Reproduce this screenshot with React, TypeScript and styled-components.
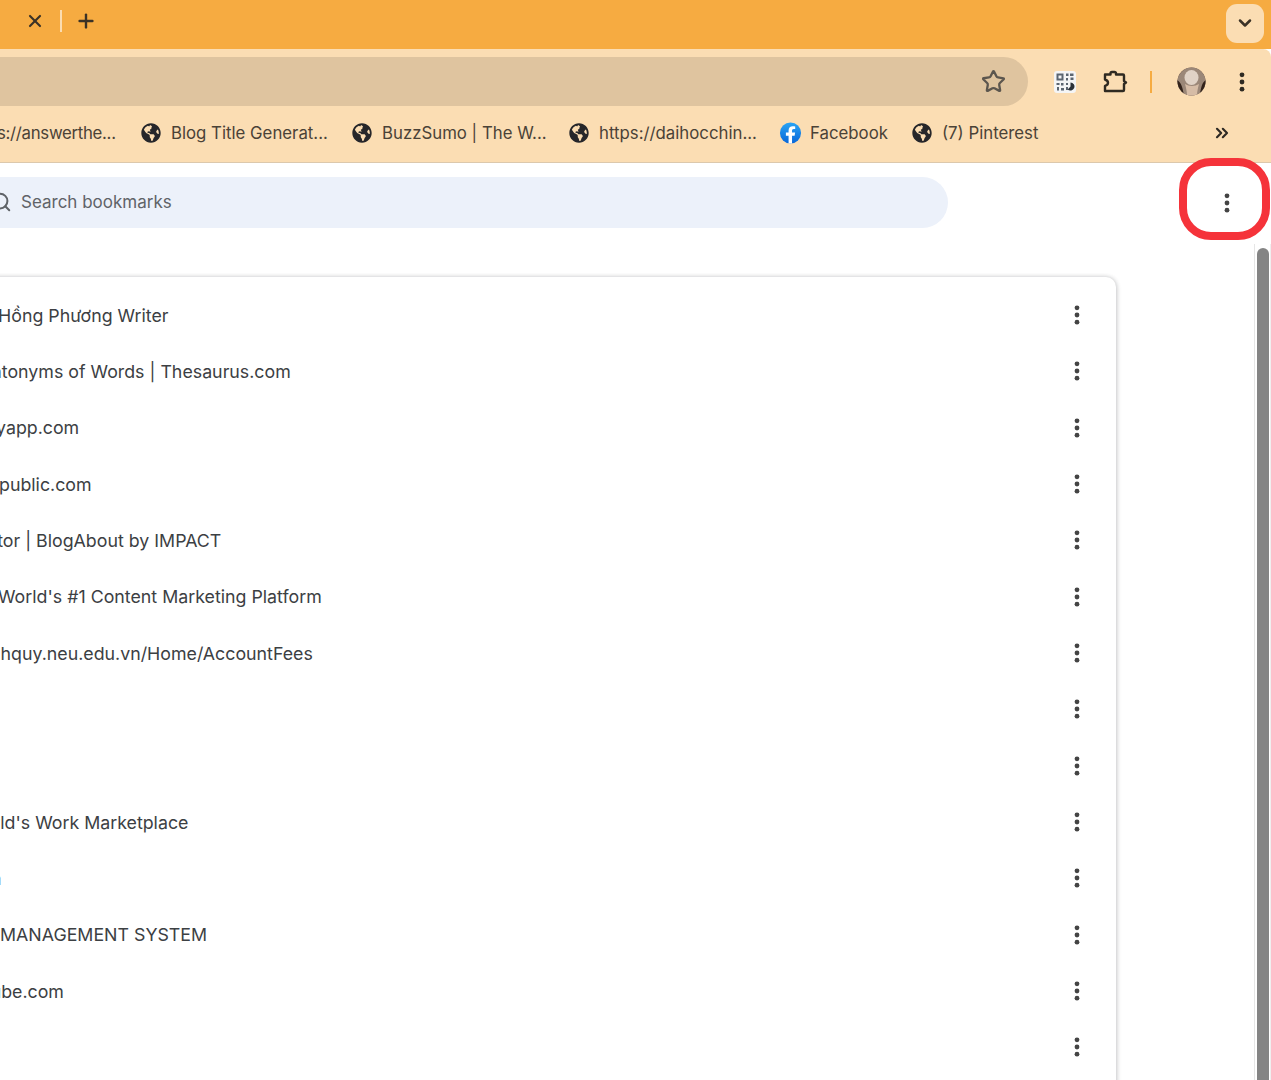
import React from 'react';
import styled, { createGlobalStyle } from 'styled-components';
import { FaGlobeAmericas } from 'react-icons/fa';
import { Search, Star, X, Plus, ChevronDown, ChevronsRight } from 'lucide-react';

const GlobalStyle = createGlobalStyle`
  html, body {
    margin: 0;
    padding: 0;
    background: #fff;
    overflow: hidden;
  }
  body {
    font-family: Inter, "Noto Sans", "Liberation Sans", sans-serif;
  }
`;

const Page = styled.div`
  width: 1271px;
  height: 1080px;
  overflow: hidden;
  display: flex;
  flex-direction: column;
`;

const TabStrip = styled.div`
  height: 49px;
  flex: none;
  background: #f6ab41;
  display: flex;
  align-items: center;
  padding: 0 7px 7px 25px;
  box-sizing: border-box;
  color: #3b3226;
`;

const TabDivider = styled.div`
  width: 2px;
  height: 22px;
  background: #fbdcb0;
  margin: 0 13px 0 15px;
`;

const TabListButton = styled.div`
  margin-left: auto;
  width: 38px;
  height: 39px;
  margin-top: 4px;
  border-radius: 11px;
  background: #fbddb3;
  display: flex;
  align-items: center;
  justify-content: center;
`;

const Toolbar = styled.div`
  height: 57px;
  flex: none;
  background: #fbddb3;
  border-top-right-radius: 8px;
  display: flex;
  align-items: flex-start;
  padding-top: 8px;
  box-sizing: border-box;
`;

const Omnibox = styled.div`
  width: 1028px;
  height: 49px;
  flex: none;
  background: #dfc49f;
  border-radius: 0 25px 25px 0;
  display: flex;
  align-items: center;
  justify-content: flex-end;
  padding-right: 22px;
  box-sizing: border-box;
  color: #5c564e;
`;

const ToolbarIcons = styled.div`
  display: flex;
  align-items: center;
  height: 49px;
  padding-left: 26px;
`;

const IconGap = styled.span<{ $width: number }>`
  width: ${({ $width }) => $width}px;
  flex: none;
`;

const ToolDivider = styled.div`
  width: 2px;
  height: 22px;
  background: #f6ab41;
  margin: 0 25px 0 22px;
`;

const BookmarksBar = styled.div`
  height: 57px;
  flex: none;
  background: #fbddb3;
  border-bottom: 1px solid #dcc8ac;
  box-sizing: border-box;
  display: flex;
  align-items: center;
  padding-bottom: 3px;
  padding-right: 39px;
  color: #4a4237;
  font-size: 16.8px;
`;

const Bookmark = styled.div<{ $width: number }>`
  display: flex;
  align-items: center;
  gap: 10px;
  white-space: nowrap;
  flex: none;
  width: ${({ $width }) => $width}px;
`;

const ClippedBookmark = styled(Bookmark)`
  margin-left: -3px;
  letter-spacing: -0.3px;
`;

const BookmarkIcon = styled.span`
  display: flex;
  width: 20px;
  height: 20px;
  color: #26262a;
`;

const FacebookSlot = styled.span`
  display: flex;
  width: 23px;
  height: 20px;
  margin-right: -2px;
  align-items: center;
  justify-content: center;
`;

const OverflowButton = styled.div`
  margin-left: auto;
  display: flex;
  color: #2f2a24;
`;

const Header = styled.div`
  height: 81px;
  flex: none;
  display: flex;
  justify-content: space-between;
  padding: 14px 24px 0 0;
  box-sizing: border-box;
  background: #fff;
`;

const SearchBox = styled.div`
  width: 988px;
  height: 51px;
  margin-left: -40px;
  background: #ecf1fa;
  border-radius: 0 26px 26px 0;
  display: flex;
  align-items: center;
  padding: 0 0 1px 30px;
  box-sizing: border-box;
  gap: 9px;
  font-size: 17px;
  color: #5f6368;
`;

const MenuButton = styled.div`
  position: relative;
  width: 40px;
  height: 51px;
  display: flex;
  align-items: center;
  justify-content: center;
`;

const Ring = styled.div`
  position: absolute;
  left: -28px;
  top: -19px;
  width: 91px;
  height: 82px;
  box-sizing: border-box;
  border: 8px solid #f5333a;
  border-radius: 32px;
`;

const Body = styled.div`
  flex: 1;
  min-height: 0;
  display: flex;
  justify-content: space-between;
  background: #fff;
`;

const CardArea = styled.div`
  padding-top: 33px;
  margin-left: -20px;
`;

const Card = styled.div`
  width: 1136px;
  padding: 10px 0 30px;
  background: #fff;
  border-radius: 10px;
  box-shadow: 0 0 4px rgba(60, 64, 67, 0.22), 1px 1px 5px rgba(60, 64, 67, 0.16);
`;

const Row = styled.div`
  height: 56.33px;
  padding: 0 19px 0 20px;
  display: flex;
  align-items: center;
  justify-content: space-between;
  font-size: 17.8px;
  color: #3c4043;
`;

const Title = styled.span<{ $lead: number }>`
  margin-left: ${({ $lead }) => $lead}px;
  white-space: nowrap;
`;

const RowMenu = styled.div`
  width: 40px;
  height: 40px;
  display: flex;
  align-items: center;
  justify-content: center;
`;

const ScrollTrack = styled.div`
  width: 17px;
  box-sizing: border-box;
  border-left: 1px solid #e6e6e6;
  border-right: 1px solid #efefef;
  padding: 4px 1px 0 2px;
`;

const ScrollThumb = styled.div`
  height: 100%;
  border-radius: 6px 6px 0 0;
  background: #848484;
`;

const Kebab = ({ color = '#444' }: { color?: string }) => (
  <svg width="6" height="20" viewBox="0 0 6 20">
    <circle cx="3" cy="2.8" r="2.4" fill={color} />
    <circle cx="3" cy="10" r="2.4" fill={color} />
    <circle cx="3" cy="17.2" r="2.4" fill={color} />
  </svg>
);

const Globe = () => (
  <BookmarkIcon>
    <FaGlobeAmericas size={20} />
  </BookmarkIcon>
);

const FacebookIcon = () => (
  <svg width="24" height="24" viewBox="0 0 24 24">
    <defs>
      <linearGradient id="fb" x1="0" y1="0" x2="0" y2="1">
        <stop offset="0" stopColor="#2aa4f4" />
        <stop offset="1" stopColor="#0866d8" />
      </linearGradient>
    </defs>
    <circle cx="12" cy="12" r="11" fill="url(#fb)" />
    <path
      d="M13.6 23v-8.2h2.7l.5-3.2h-3.2V9.6c0-.9.4-1.7 1.8-1.7h1.500V5.200s-1.300-.2-2.600-.2c-2.600 0-4.300 1.600-4.300 4.400v2.200H7.200v3.200H10V23z"
      fill="#fff"
    />
  </svg>
);

const QrIcon = () => (
  <svg width="22" height="22" viewBox="0 0 22 22">
    <rect x="0" y="0" width="22" height="22" rx="3" fill="#f4f5f6" />
    <g fill="#5b6570">
      <path d="M2.5 2.5h7v7h-7zM4.5 4.5v3h3v-3z" fillRule="evenodd" />
      <path d="M12 2.5h2.5V5H12zM16 2.500h3.500V5H16zM12 7h2v2.500h-2zM16.500 6.500h3V9h-3z" />
      <path d="M2.500 12h3v2h-3zM7 12h2.500v2.500H7zM3 16h2v3.500H3zM7 17h3v2.500H7z" />
      <path d="M12 12h2v2h-2zM12 16h2v3h-2z" />
    </g>
    <path d="M16.500 11.500a4 4 0 1 1-2.800 6.900l2.800-2.900z" fill="#2b3138" />
  </svg>
);

const PuzzleIcon = () => (
  <svg width="26" height="26" viewBox="0 0 26 26" fill="none" stroke="#2f2a22" strokeWidth="2.4" strokeLinejoin="round">
    <path d="M3 5.500h5.500V4.500a1.500 1.500 0 0 1 1.500-1.500h2.500a1.500 1.500 0 0 1 1.500 1.500v1H21a1 1 0 0 1 1 1v5.500l2 1.500-2 1.500v6a1 1 0 0 1-1 1H3v-5c2.200-.7 3-1.800 3-3.200S5.200 11.200 3 10.500z" />
  </svg>
);

const Avatar = () => (
  <svg width="29" height="29" viewBox="0 0 29 29">
    <defs>
      <clipPath id="avatar-clip">
        <circle cx="14.500" cy="14.500" r="14" />
      </clipPath>
    </defs>
    <g clipPath="url(#avatar-clip)">
      <rect width="29" height="29" fill="#6e5648" />
      <path d="M0 14C2 4 10 0 15 0s12 4 14 14v15H0z" fill="#9b8778" />
      <ellipse cx="14.500" cy="10.500" rx="7" ry="7.500" fill="#e0d2c6" />
      <path d="M8 17c1 4 2 7 2 12h10c0-5 1-8 2-12-4 2.500-10 2.500-14 0z" fill="#d6bca6" />
      <path d="M0 13c4 2 6 8 7 16H0zM29 13c-4 2-5 8-6.500 16H29z" fill="#33231b" />
    </g>
  </svg>
);

const rows: { text?: string; lead?: number }[] = [
  { text: 'Hồng Phương Writer', lead: -2 },
  { text: 'Antonyms of Words | Thesaurus.com', lead: -21 },
  { text: 'yapp.com', lead: -4 },
  { text: 'public.com', lead: -1 },
  { text: 'Generator | BlogAbout by IMPACT', lead: -64 },
  { text: "World's #1 Content Marketing Platform", lead: -2 },
  { text: 'nhquy.neu.edu.vn/Home/AccountFees', lead: -10 },
  {},
  {},
  { text: "World's Work Marketplace", lead: -34 },
  { text: 'n', lead: -9 },
  { text: 'MANAGEMENT SYSTEM', lead: 0 },
  { text: 'youtube.com', lead: -46 },
  {},
];

export default function App() {
  return (
    <Page>
      <GlobalStyle />
      <TabStrip>
        <X size={20} strokeWidth={2.6} />
        <TabDivider />
        <Plus size={22} strokeWidth={2.6} />
        <TabListButton>
          <ChevronDown size={20} strokeWidth={3} color="#3b3226" />
        </TabListButton>
      </TabStrip>
      <Toolbar>
        <Omnibox>
          <Star size={25} strokeWidth={2.2} />
        </Omnibox>
        <ToolbarIcons>
          <QrIcon />
          <IconGap $width={26} />
          <PuzzleIcon />
          <ToolDivider />
          <Avatar />
          <IconGap $width={33} />
          <Kebab color="#2f2a22" />
        </ToolbarIcons>
      </Toolbar>
      <BookmarksBar>
        <ClippedBookmark $width={144}>s://answerthe...</ClippedBookmark>
        <Bookmark $width={211}>
          <Globe />
          Blog Title Generat...
        </Bookmark>
        <Bookmark $width={217}>
          <Globe />
          BuzzSumo | The W...
        </Bookmark>
        <Bookmark $width={210}>
          <Globe />
          https://daihocchin...
        </Bookmark>
        <Bookmark $width={133}>
          <FacebookSlot>
            <FacebookIcon />
          </FacebookSlot>
          Facebook
        </Bookmark>
        <Bookmark $width={130}>
          <Globe />
          (7) Pinterest
        </Bookmark>
        <OverflowButton>
          <ChevronsRight size={20} strokeWidth={2.6} />
        </OverflowButton>
      </BookmarksBar>
      <Header>
        <SearchBox>
          <Search size={22} strokeWidth={2.2} />
          Search bookmarks
        </SearchBox>
        <MenuButton>
          <Kebab />
          <Ring />
        </MenuButton>
      </Header>
      <Body>
        <CardArea>
          <Card>
            {rows.map((row, i) => (
              <Row key={i}>
                <Title $lead={row.lead ?? 0}>{row.text}</Title>
                <RowMenu>
                  <Kebab />
                </RowMenu>
              </Row>
            ))}
          </Card>
        </CardArea>
        <ScrollTrack>
          <ScrollThumb />
        </ScrollTrack>
      </Body>
    </Page>
  );
}
